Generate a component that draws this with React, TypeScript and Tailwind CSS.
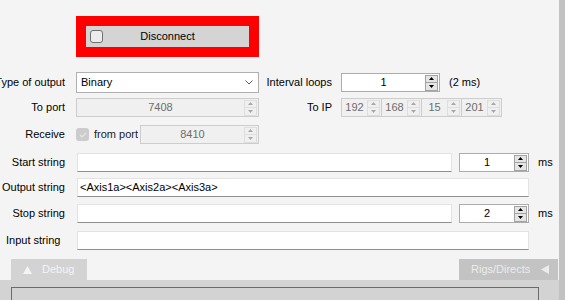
import React from "react";

const font = "font-['Liberation_Sans',Arial,sans-serif] text-[11px] leading-none";

function Tri({ dir, color }: { dir: "up" | "down"; color: string }) {
  return (
    <svg width="5" height="3" viewBox="0 0 5 3">
      {dir === "up" ? <polygon points="0,3 5,3 2.5,0" fill={color} /> : <polygon points="0,0 5,0 2.5,3" fill={color} />}
    </svg>
  );
}

function Spin({ enabled }: { enabled: boolean }) {
  const cell = enabled
    ? "flex-1 flex items-center justify-center border border-[#a3a3a3] bg-[#e5e5e5]"
    : "flex-1 flex items-center justify-center border border-[#dedede] bg-[#f0f0f0]";
  const arrow = enabled ? "#000000" : "#a8a8a8";
  return (
    <div className="flex flex-col w-[13px] h-[16px] -space-y-px mr-px shrink-0">
      <div className={cell}>
        <Tri dir="up" color={arrow} />
      </div>
      <div className={cell}>
        <Tri dir="down" color={arrow} />
      </div>
    </div>
  );
}

function NumBox({ value, enabled, className }: { value: string; enabled: boolean; className: string }) {
  return (
    <div
      className={`flex items-center h-[19px] border ${
        enabled ? "border-[#acacac] bg-white text-black" : "border-[#cdcdcd] bg-[#f0f0f0] text-[#6d6d6d]"
      } ${className}`}
    >
      <span className="flex-1 text-center">{value}</span>
      <Spin enabled={enabled} />
    </div>
  );
}

function TextBox({ value, className }: { value?: string; className: string }) {
  return (
    <div
      className={`flex items-center h-[19px] bg-white border border-[#e3e3e3] border-b-[#8f8f8f] px-[2px] ${className}`}
    >
      {value}
    </div>
  );
}

function Label({ text, left }: { text: string; left?: boolean }) {
  return (
    <div className={`flex w-[65px] shrink-0 ${left ? "justify-start pl-[6px]" : "justify-end"}`}>
      <span className="shrink-0 whitespace-nowrap">{text}</span>
    </div>
  );
}

const ipParts = ["192", "168", "15", "201"];

export default function App() {
  return (
    <div className={`flex w-[565px] h-[300px] overflow-hidden bg-[#f4f4f4] text-black ${font}`}>
      <div className="flex flex-col w-[559px] shrink-0">
        {/* Disconnect button in red frame */}
        <div className="mt-[16px] ml-[76px] w-[183px] h-[41px] bg-[#ff0000] p-[10px]">
          <div className="relative flex items-center justify-center h-[21px] bg-[#d4d4d4]">
            <div className="absolute left-[4px] top-[4px] w-[13px] h-[13px] rounded-[3px] border border-[#707070] bg-[#ececec]" />
            <span>Disconnect</span>
          </div>
        </div>

        {/* Type of output / Interval loops */}
        <div className="flex items-center mt-[15px] h-[21px]">
          <Label text="Type of output" />
          <div className="flex items-center ml-[11px] w-[183px] h-[21px] bg-white border border-[#b0b0b0] pl-[4px] pr-[5px]">
            <span className="flex-1">Binary</span>
            <svg width="8" height="5" viewBox="0 0 8 5">
              <polyline points="0.5,0.5 4,4 7.5,0.5" fill="none" stroke="#5a5a5a" strokeWidth="1" />
            </svg>
          </div>
          <div className="flex justify-end w-[65px] ml-[8px]">
            <span className="whitespace-nowrap">Interval loops</span>
          </div>
          <NumBox value="1" enabled className="ml-[9px] w-[99px]" />
          <span className="ml-[9px]">(2 ms)</span>
        </div>

        {/* To port / To IP */}
        <div className="flex items-center mt-[5px] h-[19px]">
          <Label text="To port" />
          <NumBox value="7408" enabled={false} className="ml-[11px] w-[183px]" />
          <div className="flex justify-end w-[65px] ml-[8px]">
            <span className="whitespace-nowrap">To IP</span>
          </div>
          <div className="flex ml-[9px]">
            {ipParts.map((p, i) => (
              <NumBox key={p} value={p} enabled={false} className={`w-[41px] ${i > 0 ? "-ml-px" : ""}`} />
            ))}
          </div>
        </div>

        {/* Receive */}
        <div className="flex items-center mt-[8px] h-[19px]">
          <Label text="Receive" />
          <div className="ml-[11px] flex items-center justify-center w-[13px] h-[13px] rounded-[3px] bg-[#cccccc]">
            <svg width="8" height="6" viewBox="0 0 8 6">
              <polyline points="1,3 3,5 7,1" fill="none" stroke="#e6e6e6" strokeWidth="1.2" />
            </svg>
          </div>
          <span className="ml-[5px] w-[41px] whitespace-nowrap text-[#222]">from port</span>
          <NumBox value="8410" enabled={false} className="ml-[5px] w-[119px]" />
        </div>

        {/* Start string */}
        <div className="flex items-center mt-[9px] h-[19px]">
          <Label text="Start string" />
          <TextBox className="ml-[12px] w-[375px]" />
          <NumBox value="1" enabled className="ml-[7px] w-[70px]" />
          <span className="ml-[9px]">ms</span>
        </div>

        {/* Output string */}
        <div className="flex items-center mt-[6px] h-[19px]">
          <Label text="Output string" />
          <TextBox value="<Axis1a><Axis2a><Axis3a>" className="ml-[12px] w-[452px]" />
        </div>

        {/* Stop string */}
        <div className="flex items-center mt-[7px] h-[19px]">
          <Label text="Stop string" />
          <TextBox className="ml-[12px] w-[375px]" />
          <NumBox value="2" enabled className="ml-[7px] w-[70px]" />
          <span className="ml-[9px]">ms</span>
        </div>

        {/* Input string */}
        <div className="flex items-center mt-[8px] h-[19px]">
          <Label text="Input string" left />
          <TextBox className="ml-[12px] w-[452px]" />
        </div>

        {/* Tabs */}
        <div className="flex justify-between items-end mt-[9px] h-[21px] pl-[11px] pr-px">
          <div className="flex items-center h-full w-[76px] bg-[#d3d3d3] text-[#f4f4f4] pl-[12px] gap-[10px]">
            <svg width="9" height="8" viewBox="0 0 9 8">
              <polygon points="0,8 9,8 4.5,0" fill="#f4f4f4" />
            </svg>
            <span>Debug</span>
          </div>
          <div className="flex items-center h-full w-[99px] bg-[#c3c3c3] text-[#ececec] pl-[12px] gap-[11px]">
            <span>Rigs/Directs</span>
            <svg width="8" height="9" viewBox="0 0 8 9">
              <polygon points="8,0 8,9 0,4.5" fill="#ececec" />
            </svg>
          </div>
        </div>

        {/* Bottom panel */}
        <div className="flex-1 bg-[#d3d3d3] pt-[7px] pl-[11px] pr-[20px]">
          <div className="h-full border border-b-0 border-[#6b6b6b]" />
        </div>
      </div>
      <div className="flex-1 bg-[#c2c2c2]" />
    </div>
  );
}
